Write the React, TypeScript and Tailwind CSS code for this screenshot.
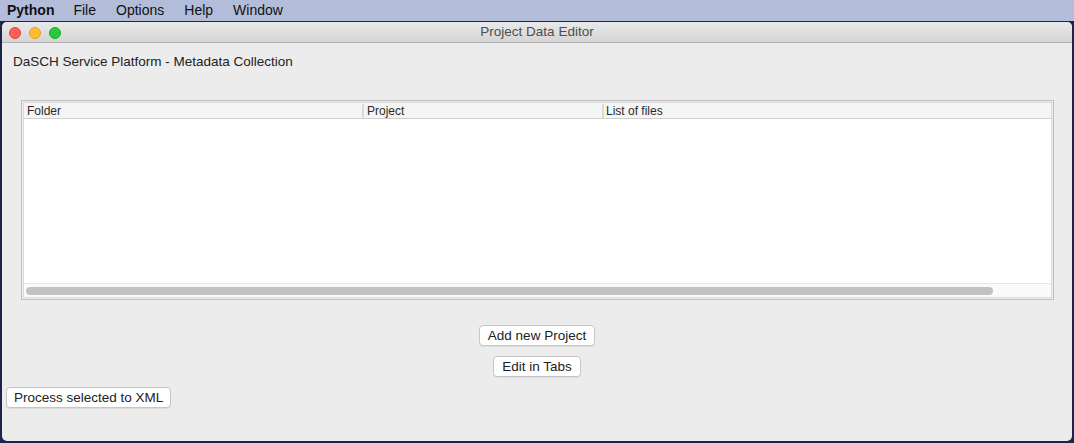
export default function App() {
  const menus = ['File', 'Options', 'Help', 'Window'];

  return (
    <div
      className="w-[1074px] h-[443px] bg-[#1c2549] flex flex-col overflow-hidden"
      style={{ fontFamily: '"Liberation Sans", Arial, sans-serif' }}
    >
      {/* Menu bar */}
      <div className="h-[21px] shrink-0 bg-[#b3bdda] flex items-center pl-[7px] text-[14px] text-[#111]">
        <span className="font-bold mr-[19px]">Python</span>
        {menus.map((m) => (
          <span key={m} className="mr-[20px]">{m}</span>
        ))}
      </div>

      {/* Window */}
      <div className="flex-1 mx-[2px] mt-[1px] mb-[2px] rounded-[5px] bg-[#ececec] flex flex-col overflow-hidden">
        {/* Title bar */}
        <div className="relative h-[21px] shrink-0 bg-gradient-to-b from-[#e9e9e9] to-[#d5d5d5] border-b border-[#b0b0b0] flex items-center justify-center">
          <div className="absolute left-[7px] top-[5px] flex gap-[8px]">
            <span className="w-[12px] h-[12px] rounded-full bg-[#fe5f57] border border-[#e2463f]" />
            <span className="w-[12px] h-[12px] rounded-full bg-[#febc2e] border border-[#dea123]" />
            <span className="w-[12px] h-[12px] rounded-full bg-[#28c840] border border-[#1aab29]" />
          </div>
          <span className="text-[13.5px] text-[#4d4d4d]">Project Data Editor</span>
        </div>

        {/* Content */}
        <div className="flex-1 flex flex-col text-[13.5px] text-[#222]">
          <div className="pl-[11px] pt-[11px] leading-[16px]">DaSCH Service Platform - Metadata Collection</div>

          {/* Table */}
          <div className="ml-[19px] mr-[18px] mt-[30px] h-[200px] border border-[#bfbfbf] p-[1px] flex">
            <div className="flex-1 flex flex-col border border-[#dcdcdc] bg-white">
              <div className="h-[16px] bg-[#f5f5f5] border-b border-[#cfcfcf] flex items-center text-[12px] text-[#2a2a2a] pt-[1px]">
                <div className="w-[338px] pl-[3px]">Folder</div>
                <div className="w-[240px] h-full flex items-center border-l-2 border-[#dadada] pl-[3px]">Project</div>
                <div className="flex-1 h-full flex items-center border-l-2 border-[#dadada] pl-[2px]">List of files</div>
              </div>
              <div className="flex-1" />
              <div className="h-[14px] bg-[#fafafa] border-t border-[#e6e6e6] flex items-center pl-[2px]">
                <div className="w-[967px] h-[8px] rounded-full bg-[#c2c2c2]" />
              </div>
            </div>
          </div>

          {/* Buttons */}
          <div className="flex flex-col items-center mt-[25px] gap-[10px]">
            <button className="h-[21px] px-[8px] bg-white border border-[#c6c6c6] rounded-[4px] shadow-[0_1px_0_rgba(0,0,0,0.06)] text-[13.5px] text-[#222]">
              Add new Project
            </button>
            <button className="h-[21px] px-[8px] bg-white border border-[#c6c6c6] rounded-[4px] shadow-[0_1px_0_rgba(0,0,0,0.06)] text-[13.5px] text-[#222]">
              Edit in Tabs
            </button>
          </div>
          <div className="pl-[4px] mt-[10px]">
            <button className="h-[21px] px-[7px] bg-white border border-[#c6c6c6] rounded-[4px] shadow-[0_1px_0_rgba(0,0,0,0.06)] text-[13.5px] text-[#222]">
              Process selected to XML
            </button>
          </div>
        </div>
      </div>
    </div>
  );
}
